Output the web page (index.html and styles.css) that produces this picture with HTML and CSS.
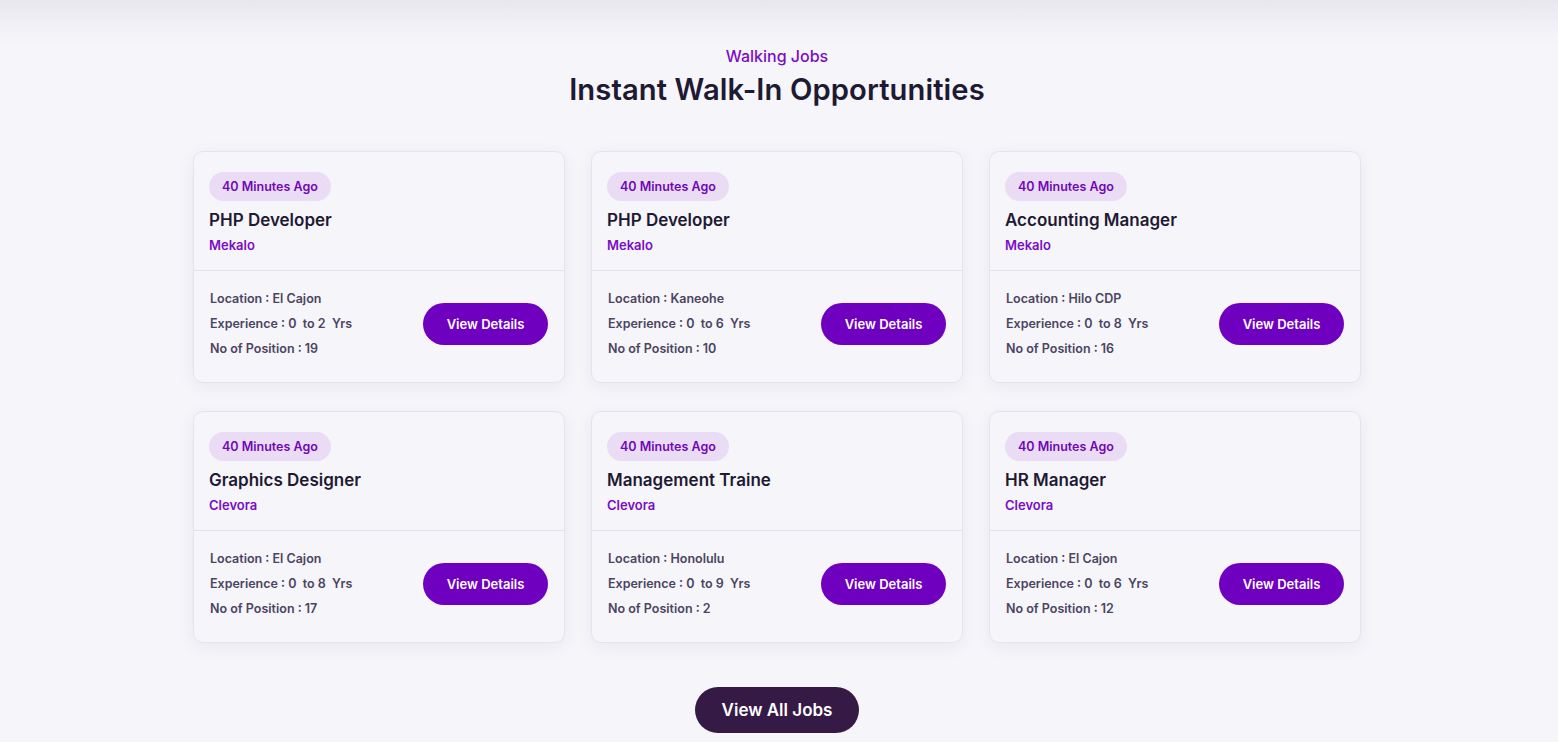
FILE: index.html
```html
<!DOCTYPE html>
<html lang="en">
<head>
<meta charset="utf-8">
<title>Walking Jobs</title>
<link rel="stylesheet" href="styles.css">
</head>
<body>
<section class="walkin">
  <div class="heading">
    <p class="eyebrow">Walking Jobs</p>
    <h2 class="title">Instant Walk-In Opportunities</h2>
  </div>
  <div class="grid">
    <article class="card">
      <div class="card-top">
        <span class="badge">40 Minutes Ago</span>
        <h3 class="job">PHP Developer</h3>
        <p class="company">Mekalo</p>
      </div>
      <div class="card-bottom">
        <ul class="meta">
          <li>Location : El Cajon</li>
          <li>Experience : 0&nbsp; to 2&nbsp; Yrs</li>
          <li>No of Position : 19</li>
        </ul>
        <a class="btn" href="#">View Details</a>
      </div>
    </article>
    <article class="card">
      <div class="card-top">
        <span class="badge">40 Minutes Ago</span>
        <h3 class="job">PHP Developer</h3>
        <p class="company">Mekalo</p>
      </div>
      <div class="card-bottom">
        <ul class="meta">
          <li>Location : Kaneohe</li>
          <li>Experience : 0&nbsp; to 6&nbsp; Yrs</li>
          <li>No of Position : 10</li>
        </ul>
        <a class="btn" href="#">View Details</a>
      </div>
    </article>
    <article class="card">
      <div class="card-top">
        <span class="badge">40 Minutes Ago</span>
        <h3 class="job">Accounting Manager</h3>
        <p class="company">Mekalo</p>
      </div>
      <div class="card-bottom">
        <ul class="meta">
          <li>Location : Hilo CDP</li>
          <li>Experience : 0&nbsp; to 8&nbsp; Yrs</li>
          <li>No of Position : 16</li>
        </ul>
        <a class="btn" href="#">View Details</a>
      </div>
    </article>
    <article class="card">
      <div class="card-top">
        <span class="badge">40 Minutes Ago</span>
        <h3 class="job">Graphics Designer</h3>
        <p class="company">Clevora</p>
      </div>
      <div class="card-bottom">
        <ul class="meta">
          <li>Location : El Cajon</li>
          <li>Experience : 0&nbsp; to 8&nbsp; Yrs</li>
          <li>No of Position : 17</li>
        </ul>
        <a class="btn" href="#">View Details</a>
      </div>
    </article>
    <article class="card">
      <div class="card-top">
        <span class="badge">40 Minutes Ago</span>
        <h3 class="job">Management Traine</h3>
        <p class="company">Clevora</p>
      </div>
      <div class="card-bottom">
        <ul class="meta">
          <li>Location : Honolulu</li>
          <li>Experience : 0&nbsp; to 9&nbsp; Yrs</li>
          <li>No of Position : 2</li>
        </ul>
        <a class="btn" href="#">View Details</a>
      </div>
    </article>
    <article class="card">
      <div class="card-top">
        <span class="badge">40 Minutes Ago</span>
        <h3 class="job">HR Manager</h3>
        <p class="company">Clevora</p>
      </div>
      <div class="card-bottom">
        <ul class="meta">
          <li>Location : El Cajon</li>
          <li>Experience : 0&nbsp; to 6&nbsp; Yrs</li>
          <li>No of Position : 12</li>
        </ul>
        <a class="btn" href="#">View Details</a>
      </div>
    </article>
  </div>
  <div class="more">
    <a class="btn-all" href="#">View All Jobs</a>
  </div>
</section>
</body>
</html>
```

FILE: styles.css
```css
* { box-sizing: border-box; }
html, body { margin: 0; padding: 0; }
body {
  background: #f6f5fa;
  font-family: "Inter", "Noto Sans", sans-serif;
  color: #1e1a30;
  overflow: hidden;
}
.walkin {
  background: linear-gradient(to bottom, #e9e7ee 0px, #f3f2f7 30px, #f6f5fa 48px);
  padding: 44px 4px 0 0;
  min-height: 742px;
}
.heading { text-align: center; }
.eyebrow {
  margin: 0;
  font-size: 16px;
  line-height: 24px;
  font-weight: 500;
  color: #7a0dc4;
}
.title {
  margin: 4px 0 0;
  font-size: 29.2px;
  line-height: 36px;
  font-weight: 600;
  color: #1f1a33;
  letter-spacing: 0.1px;
}
.grid {
  width: 1168px;
  margin: 43px auto 0;
  display: grid;
  grid-template-columns: repeat(3, 372px);
  column-gap: 26px;
  row-gap: 28px;
}
.card {
  background: #f6f5fa;
  border: 1px solid #e6e3ee;
  border-radius: 10px;
  box-shadow: 0 4px 18px rgba(60, 40, 100, 0.06);
}
.card-top {
  padding: 20px 15px 16px;
  border-bottom: 1px solid #e4e1ec;
}
.badge {
  display: inline-block;
  height: 29px;
  line-height: 29px;
  padding: 0 13px;
  border-radius: 15px;
  background: #eadcf4;
  color: #7008b8;
  font-size: 12.5px;
  font-weight: 600;
}
.job {
  margin: 7px 0 0;
  font-size: 17px;
  line-height: 25px;
  font-weight: 600;
  color: #1f1a33;
}
.company {
  margin: 3px 0 0;
  font-size: 13px;
  line-height: 18px;
  font-weight: 600;
  color: #7a0dc4;
}
.card-bottom {
  display: flex;
  align-items: center;
  justify-content: space-between;
  padding: 15px 16px 21px 16px;
}
.meta {
  list-style: none;
  margin: 0;
  padding: 0;
}
.meta li {
  font-size: 12.5px;
  line-height: 25px;
  font-weight: 600;
  color: #4b4462;
}
.btn {
  display: inline-flex;
  align-items: center;
  justify-content: center;
  width: 125px;
  height: 42px;
  border-radius: 21px;
  background: #7000bf;
  color: #fff;
  font-size: 13px;
  font-weight: 600;
  text-decoration: none;
}
.more {
  display: flex;
  justify-content: center;
  margin-top: 44px;
}
.btn-all {
  display: inline-flex;
  align-items: center;
  justify-content: center;
  width: 164px;
  height: 46px;
  border-radius: 23px;
  background: #351a45;
  color: #fff;
  font-size: 17px;
  font-weight: 600;
  text-decoration: none;
}
```
